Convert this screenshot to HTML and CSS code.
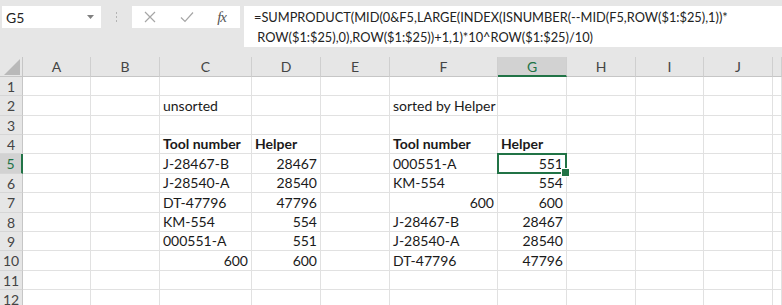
FILE: index.html
```html
<!DOCTYPE html>
<html>
<head>
<meta charset="utf-8">
<link rel="stylesheet" href="styles.css">
</head>
<body>
<div class="topbar">
  <div class="namebox"><span>G5</span><svg class="dd" width="7" height="4" viewBox="0 0 7 4"><path d="M0 0h7L3.5 4z" fill="#808080"/></svg></div>
  <div class="sep"><i></i><i></i><i></i></div>
  <div class="btns">
    <svg width="14" height="14" viewBox="0 0 14 14"><path d="M2 2l10 10M12 2L2 12" stroke="#a6a6a6" stroke-width="1.2" fill="none"/></svg>
    <svg width="16" height="14" viewBox="0 0 16 14"><path d="M2 7.5l4 4L14 2.5" stroke="#a6a6a6" stroke-width="1.2" fill="none"/></svg>
    <span class="fx">fx</span>
  </div>
  <div class="formula">=SUMPRODUCT(MID(0&amp;F5,LARGE(INDEX(ISNUMBER(--MID(F5,ROW($1:$25),1))*<br>&nbsp;ROW($1:$25),0),ROW($1:$25))+1,1)*10^ROW($1:$25)/10)</div>
</div>
<div class="sheet">
  <div class="corner"><svg width="16" height="16" viewBox="0 0 16 16"><path d="M16 0V16H0z" fill="#b9b9b9"/></svg></div>
  <div class="ch">A</div><div class="ch">B</div><div class="ch">C</div><div class="ch">D</div><div class="ch">E</div><div class="ch">F</div><div class="ch sel">G</div><div class="ch">H</div><div class="ch">I</div><div class="ch">J</div><div class="ch"></div>

  <div class="rh">1</div><div class="c"></div><div class="c"></div><div class="c"></div><div class="c"></div><div class="c"></div><div class="c"></div><div class="c"></div><div class="c"></div><div class="c"></div><div class="c"></div><div class="c"></div>

  <div class="rh">2</div><div class="c"></div><div class="c"></div><div class="c">unsorted</div><div class="c"></div><div class="c"></div><div class="c">sorted by Helper</div><div class="c"></div><div class="c"></div><div class="c"></div><div class="c"></div><div class="c"></div>

  <div class="rh">3</div><div class="c"></div><div class="c"></div><div class="c"></div><div class="c"></div><div class="c"></div><div class="c"></div><div class="c"></div><div class="c"></div><div class="c"></div><div class="c"></div><div class="c"></div>

  <div class="rh">4</div><div class="c"></div><div class="c"></div><div class="c b">Tool number</div><div class="c b">Helper</div><div class="c"></div><div class="c b">Tool number</div><div class="c b">Helper</div><div class="c"></div><div class="c"></div><div class="c"></div><div class="c"></div>

  <div class="rh sel">5</div><div class="c"></div><div class="c"></div><div class="c">J-28467-B</div><div class="c n">28467</div><div class="c"></div><div class="c">000551-A</div><div class="c n active">551</div><div class="c"></div><div class="c"></div><div class="c"></div><div class="c"></div>

  <div class="rh">6</div><div class="c"></div><div class="c"></div><div class="c">J-28540-A</div><div class="c n">28540</div><div class="c"></div><div class="c">KM-554</div><div class="c n">554</div><div class="c"></div><div class="c"></div><div class="c"></div><div class="c"></div>

  <div class="rh">7</div><div class="c"></div><div class="c"></div><div class="c">DT-47796</div><div class="c n">47796</div><div class="c"></div><div class="c n">600</div><div class="c n">600</div><div class="c"></div><div class="c"></div><div class="c"></div><div class="c"></div>

  <div class="rh">8</div><div class="c"></div><div class="c"></div><div class="c">KM-554</div><div class="c n">554</div><div class="c"></div><div class="c">J-28467-B</div><div class="c n">28467</div><div class="c"></div><div class="c"></div><div class="c"></div><div class="c"></div>

  <div class="rh">9</div><div class="c"></div><div class="c"></div><div class="c">000551-A</div><div class="c n">551</div><div class="c"></div><div class="c">J-28540-A</div><div class="c n">28540</div><div class="c"></div><div class="c"></div><div class="c"></div><div class="c"></div>

  <div class="rh">10</div><div class="c"></div><div class="c"></div><div class="c n">600</div><div class="c n">600</div><div class="c"></div><div class="c">DT-47796</div><div class="c n">47796</div><div class="c"></div><div class="c"></div><div class="c"></div><div class="c"></div>

  <div class="rh">11</div><div class="c"></div><div class="c"></div><div class="c"></div><div class="c"></div><div class="c"></div><div class="c"></div><div class="c"></div><div class="c"></div><div class="c"></div><div class="c"></div><div class="c"></div>

  <div class="rh">12</div><div class="c"></div><div class="c"></div><div class="c"></div><div class="c"></div><div class="c"></div><div class="c"></div><div class="c"></div><div class="c"></div><div class="c"></div><div class="c"></div><div class="c"></div>
</div>
</body>
</html>
```
FILE: styles.css
```css
* { box-sizing: border-box; }
html, body { margin: 0; padding: 0; }
body {
  background: #e6e6e6;
  font-family: "Lato", "Open Sans", sans-serif;
  font-size: 14px;
  color: #1a1a1a;
  width: 782px;
  height: 305px;
  overflow: hidden;
}
.topbar {
  height: 57px;
  display: flex;
  align-items: flex-start;
  padding-top: 6px;
  padding-left: 2px;
}
.namebox {
  width: 99px;
  height: 22px;
  background: #fff;
  display: flex;
  align-items: center;
  justify-content: space-between;
  padding: 0 7px 0 4px;
  color: #222;
}
.sep {
  width: 31px;
  height: 22px;
  display: flex;
  flex-direction: column;
  align-items: center;
  justify-content: center;
  gap: 2px;
}
.sep i {
  display: block;
  width: 1px;
  height: 2px;
  background: #b4b4b4;
}
.btns {
  width: 108px;
  height: 22px;
  background: #fff;
  display: flex;
  align-items: center;
  justify-content: space-between;
  padding: 0 14px 0 11px;
}
.fx {
  font-family: "Liberation Serif", serif;
  font-style: italic;
  font-size: 15px;
  color: #555;
  letter-spacing: -1px;
}
.formula {
  margin-left: 4px;
  flex: 1;
  height: 41px;
  background: #fff;
  padding: 1px 0 0 10px;
  line-height: 20px;
  font-size: 12.8px;
  white-space: nowrap;
  color: #222;
}
.sheet {
  display: grid;
  grid-template-columns: 23px 68px 69px 92px 69px 69px 108px 69px 69px 68px 69px 1fr;
  grid-template-rows: 20px 19px 20px 19px 19px 20px 19px 20px 19px 19px 20px 19px 20px;
  background: #fff;
}
.corner {
  background: #e6e6e6;
  border-right: 1px solid #c6c6c6;
  border-bottom: 1px solid #c6c6c6;
  display: flex;
  align-items: flex-end;
  justify-content: flex-end;
  padding: 0 2px 1px 0;
}
.ch {
  background: #e6e6e6;
  border-right: 1px solid #cfcfcf;
  border-bottom: 1px solid #c6c6c6;
  display: flex;
  align-items: center;
  justify-content: center;
  color: #444;
  font-size: 14px;
}
.ch.sel {
  background: #d2d2d2;
  color: #217346;
  border-bottom: 2px solid #217346;
}
.rh {
  background: #e6e6e6;
  border-right: 1px solid #c6c6c6;
  border-bottom: 1px solid #d6d6d6;
  display: flex;
  align-items: center;
  justify-content: center;
  color: #444;
  font-size: 14px;
}
.rh.sel {
  background: #d2d2d2;
  color: #217346;
  border-right: 2px solid #217346;
}
.c {
  border-right: 1px solid #e1e1e1;
  border-bottom: 1px solid #e1e1e1;
  display: flex;
  align-items: flex-end;
  padding: 0 3px 0 3px;
  white-space: nowrap;
  line-height: 18px;
}
.c.b { font-weight: bold; }
.c.n { justify-content: flex-end; }
.c.active { position: relative; }
.c.active::after {
  content: "";
  position: absolute;
  left: -1px;
  top: -1px;
  right: -1px;
  bottom: -1px;
  border: 2px solid #217346;
}
.c.active::before {
  content: "";
  position: absolute;
  right: -4px;
  bottom: -4px;
  width: 7px;
  height: 7px;
  background: #217346;
  border: 1px solid #fff;
  z-index: 1;
}
```
